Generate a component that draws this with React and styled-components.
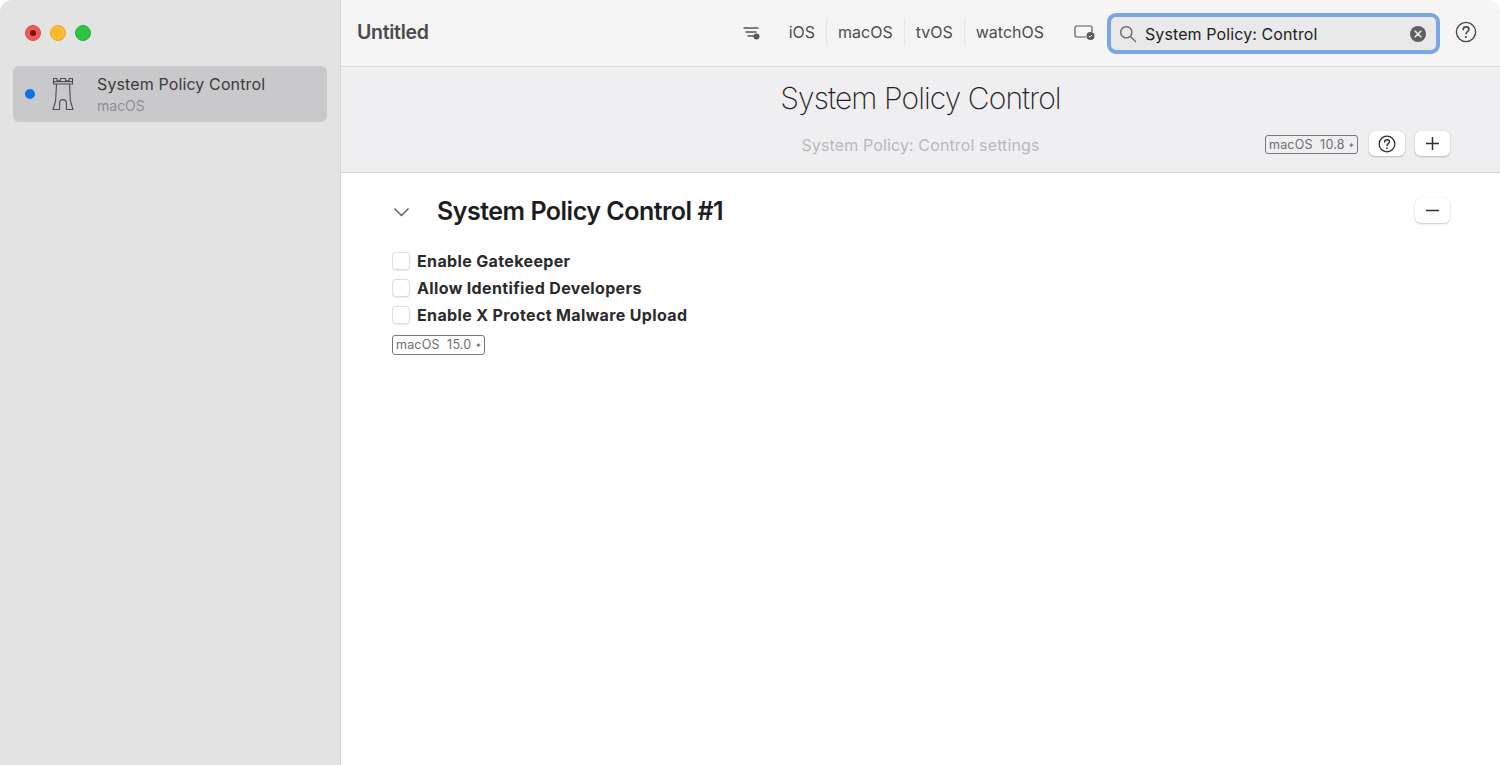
import React from "react";
import styled, { createGlobalStyle } from "styled-components";

const Global = createGlobalStyle`
  html, body { margin: 0; padding: 0; background: #fff; }
  body { font-family: Inter, "Liberation Sans", sans-serif; overflow: hidden; }
  * { box-sizing: border-box; }
`;
const Window = styled.div`display: flex; width: 1500px; height: 765px; background: #fff; overflow: hidden;`;
const Sidebar = styled.aside`
  width: 341px; flex: none; background: #e3e3e4; border-right: 1px solid #d6d6d7;
  border-top-left-radius: 12px; padding: 0 13px 0 13px;
`;
const Lights = styled.div`display: flex; gap: 9px; height: 66px; align-items: center; padding: 0 0 1px 12px;`;
const Light = styled.span`
  position: relative; width: 16px; height: 16px; border-radius: 50%; background: ${p => p.$c};
  border: 1px solid ${p => p.$b};
`;
const Dot = styled.span`
  position: absolute; left: 4px; top: 4px; width: 6px; height: 6px; border-radius: 50%; background: #7c1111;
`;
const SideRow = styled.div`
  display: flex; align-items: center; height: 56px; background: #c9c9cb; border-radius: 6px; padding-left: 12px;
`;
const BlueDot = styled.span`width: 10px; height: 10px; border-radius: 50%; background: #0f6ff2; flex: none;`;
const SideIcon = styled.svg`width: 24px; height: 34px; margin-left: 16px; flex: none;`;
const SideText = styled.div`margin-left: 22px; display: flex; flex-direction: column; margin-top: 1px;`;
const SideTitle = styled.div`font-size: 16px; line-height: 20px; color: #3b3b3d; letter-spacing: 0.12px;`;
const SideSub = styled.div`font-size: 14px; line-height: 20px; margin-top: 2px; color: #8f8f91;`;
const Main = styled.main`flex: 1; display: flex; flex-direction: column; min-width: 0;`;
const Toolbar = styled.header`
  height: 67px; flex: none; display: flex; align-items: center; background: #f5f5f6;
  border-bottom: 1px solid #d9d9da; padding: 0 23px 2px 16px; border-top-right-radius: 12px;
`;
const DocTitle = styled.div`font-size: 19.5px; font-weight: 600; color: #4a4a4c; letter-spacing: -0.3px;`;
const Spacer = styled.div`flex: 1;`;
const Plain = styled.svg`display: block; flex: none;`;
const MonitorIcon = styled(Plain)`margin-left: 19px; margin-top: 1px;`;
const FilterIcon = styled(Plain)`margin-top: 2px;`;
const Tabs = styled.div`display: flex; align-items: center; margin-left: 17px;`;
const Tab = styled.div`
  font-size: 16px; line-height: 26px; color: #4d4d4f; padding: 0 11px;
  border-left: ${p => (p.$first ? "none" : "1px solid #e6e6e7")};
`;
const Search = styled.div`
  display: flex; align-items: center; width: 333px; height: 41px; margin: 3px 0 0 12px; padding: 0 10px 0 8px;
  background: #e9e9ea; border: 4px solid #7ba6e6; border-radius: 9px;
`;
const SearchText = styled.div`flex: 1; margin: 1px 0 0 8px; font-size: 16px; color: #222224; letter-spacing: 0.1px;`;
const HelpWrap = styled.div`margin-left: 15px; display: flex;`;
const Header = styled.section`
  height: 106px; flex: none; background: #efeff1; border-bottom: 1px solid #d4d4d5;
  display: flex; flex-direction: column; align-items: center; position: relative;
`;
const BigTitle = styled.h1`
  margin: 10px 0 0; font-size: 30px; line-height: 42px; font-weight: 200; color: #1f1f21; letter-spacing: -0.9px;
`;
const SubTitle = styled.div`margin-top: 14px; font-size: 16px; line-height: 24px; color: #b9b9bb; letter-spacing: 0.13px;`;
const HeaderTools = styled.div`
  position: absolute; right: 50px; top: 64px; display: flex; align-items: center; gap: 10px;
`;
const ToolBadge = styled.div`margin: 2px 1px 0 0; display: flex;`;
const Badge = styled.div`
  display: inline-flex; align-items: center; height: ${p => p.$h}px; width: ${p => p.$w}px; padding: 0 2px 0 3px;
  border: 1px solid #77777a; border-radius: 3px; font-size: 12.5px; color: #6e6e70; white-space: nowrap;
  justify-content: space-between; letter-spacing: 0.2px;
`;
const Star = styled.span`font-size: 8px; color: #77777a; line-height: 1;`;
const IconBtn = styled.button`
  width: ${p => p.$w || 35}px; height: 25px; padding: 0; border: none; background: #fff; border-radius: 6px;
  box-shadow: 0 1px 2px rgba(0,0,0,.22), 0 0 1px rgba(0,0,0,.12);
  display: flex; align-items: center; justify-content: center;
`;
const RemoveBtn = styled(IconBtn)`margin-bottom: 2px;`;
const Content = styled.section`flex: 1; background: #fff; padding: 25px 50px 0 51px;`;
const SectionHead = styled.div`display: flex; align-items: center; height: 27px;`;
const Chevron = styled(Plain)`margin-left: 1px;`;
const SectionTitle = styled.h2`margin: 0 0 0 27px; flex: 1; font-size: 25px; line-height: 27px; font-weight: 600; color: #1d1d1f; letter-spacing: -0.5px;`;
const Options = styled.div`margin-top: 25px; display: flex; flex-direction: column; gap: 5px;`;
const Option = styled.label`display: flex; align-items: center; height: 22px;`;
const Check = styled.span`
  width: 18px; height: 18px; border: 1px solid #dedee0; border-radius: 4px; background: #fff; flex: none;
  box-shadow: 0 0.5px 1px rgba(0,0,0,.08);
`;
const OptionLabel = styled.span`margin-left: 7px; font-size: 16px; font-weight: 700; color: #2a2a2c; letter-spacing: 0.36px;`;
const BadgeRow = styled.div`margin-top: 7px;`;

const Help = ({ size = 22, color = "#4a4a4c", sw = 1.4 }) => (
  <Plain width={size} height={size} viewBox="0 0 22 22" fill="none">
    <circle cx="11" cy="11" r="9.6" stroke={color} strokeWidth={sw} />
    <path d="M8.1 8.6c.1-1.7 1.3-2.7 3-2.7 1.7 0 2.9 1 2.9 2.4 0 1.1-.6 1.7-1.5 2.3-.9.6-1.4 1.1-1.4 2.1" stroke={color} strokeWidth={sw + .2} strokeLinecap="round" />
    <circle cx="10.9" cy="16" r="1.1" fill={color} />
  </Plain>
);

export default function App() {
  return (
    <>
      <Global />
      <Window>
        <Sidebar>
          <Lights>
            <Light $c="#ef5a55" $b="#dc4a45"><Dot /></Light>
            <Light $c="#fcbb2e" $b="#e9a825" />
            <Light $c="#2bc53f" $b="#24b036" />
          </Lights>
          <SideRow>
            <BlueDot />
            <SideIcon viewBox="0 0 24 34" fill="none" stroke="#4c4c4e" strokeWidth="1.1">
              <path d="M2.5 1.5h3.5v2.4h3.4V1.5h5.2v2.4H18V1.5h3.5V7h-19z" strokeLinejoin="round" />
              <path d="M2.5 4.6h19" />
              <path d="M5.5 7.2 4.6 24 2 32.5h6.6V26a3.4 3.4 0 0 1 6.8 0v6.5H22L19.4 24l-.9-16.8" strokeLinejoin="round" />
            </SideIcon>
            <SideText>
              <SideTitle>System Policy Control</SideTitle>
              <SideSub>macOS</SideSub>
            </SideText>
          </SideRow>
        </Sidebar>
        <Main>
          <Toolbar>
            <DocTitle>Untitled</DocTitle>
            <Spacer />
            <FilterIcon width="18" height="14" viewBox="0 0 18 14" fill="none" stroke="#55555a" strokeWidth="1.4" strokeLinecap="round">
              <path d="M1 2h14M3 6h10M5 10h6" />
              <circle cx="13.5" cy="10.5" r="3" fill="#55555a" stroke="none" />
            </FilterIcon>
            <Tabs>
              <Tab $first>iOS</Tab>
              <Tab>macOS</Tab>
              <Tab>tvOS</Tab>
              <Tab>watchOS</Tab>
            </Tabs>
            <MonitorIcon width="21" height="15" viewBox="0 0 21 15" fill="none">
              <path d="M12 12H2.6A1.6 1.6 0 0 1 1 10.4V2.6A1.6 1.6 0 0 1 2.6 1h13.8A1.6 1.6 0 0 1 18 2.6V7" stroke="#59595c" strokeWidth="1.2" />
              <circle cx="16.5" cy="11" r="4" fill="#59595c" />
              <path d="m14.8 11 1.2 1.2 2-2.2" stroke="#f5f5f6" strokeWidth="1" />
            </MonitorIcon>
            <Search>
              <Plain width="18" height="18" viewBox="0 0 18 18" fill="none" stroke="#6a6a6d" strokeWidth="1.4" strokeLinecap="round">
                <circle cx="7.3" cy="7.3" r="5.6" />
                <path d="m11.5 11.5 5 5" />
              </Plain>
              <SearchText>System Policy: Control</SearchText>
              <Plain width="16" height="16" viewBox="0 0 16 16">
                <circle cx="8" cy="8" r="8" fill="#5f5f62" />
                <path d="m5.2 5.2 5.6 5.6m0-5.6-5.6 5.6" stroke="#e9e9ea" strokeWidth="1.6" strokeLinecap="round" />
              </Plain>
            </Search>
            <HelpWrap><Help /></HelpWrap>
          </Toolbar>
          <Header>
            <BigTitle>System Policy Control</BigTitle>
            <SubTitle>System Policy: Control settings</SubTitle>
            <HeaderTools>
              <ToolBadge><Badge $w={93} $h={19}>macOS&nbsp;&nbsp;10.8<Star>✦</Star></Badge></ToolBadge>
              <IconBtn $w={36} aria-label="Help"><Help size={18} color="#2f2f31" sw={1.6} /></IconBtn>
              <IconBtn aria-label="Add">
                <Plain width="15" height="15" viewBox="0 0 15 15" stroke="#2f2f31" strokeWidth="1.5"><path d="M7.5 1v13M1 7.5h13" /></Plain>
              </IconBtn>
            </HeaderTools>
          </Header>
          <Content>
            <SectionHead>
              <Chevron width="17" height="10" viewBox="0 0 17 10" fill="none" stroke="#5a5a5c" strokeWidth="1.4"><path d="m1.5 1.5 7 7 7-7" /></Chevron>
              <SectionTitle>System Policy Control #1</SectionTitle>
              <RemoveBtn aria-label="Remove">
                <Plain width="15" height="3" viewBox="0 0 15 3" stroke="#2f2f31" strokeWidth="1.5"><path d="M1 1.5h13" /></Plain>
              </RemoveBtn>
            </SectionHead>
            <Options>
              <Option><Check /><OptionLabel>Enable Gatekeeper</OptionLabel></Option>
              <Option><Check /><OptionLabel>Allow Identified Developers</OptionLabel></Option>
              <Option><Check /><OptionLabel>Enable X Protect Malware Upload</OptionLabel></Option>
            </Options>
            <BadgeRow><Badge $w={93} $h={20}>macOS&nbsp;&nbsp;15.0<Star>✦</Star></Badge></BadgeRow>
          </Content>
        </Main>
      </Window>
    </>
  );
}
